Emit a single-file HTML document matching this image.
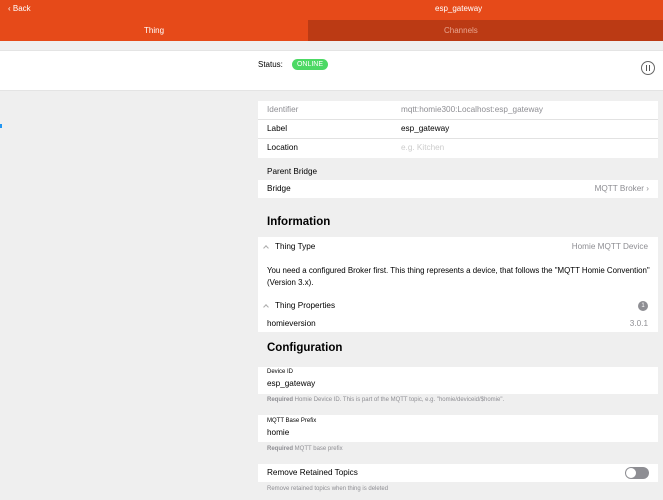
<!DOCTYPE html><html><head><style>
*{margin:0;padding:0;box-sizing:border-box}
body{width:663px;height:500px;overflow:hidden;background:#efefef;font-family:"Liberation Sans",sans-serif;font-size:8.2px;color:#000;position:relative}
.a{position:absolute;white-space:nowrap}
.r{position:absolute;white-space:nowrap;right:14px;text-align:right}
.w{position:absolute;background:#fff;left:258px;width:400px}
.line{position:absolute;left:258px;width:400px;height:1px;background:#e2e2e2}
.g{color:#8e8e93}
.car{position:absolute;width:4px;height:4px;border-left:1px solid #aaa;border-top:1px solid #aaa;transform:rotate(45deg)}
</style></head><body>
<div class="a" style="left:0;top:0;width:663px;height:41px;background:#e64a19"></div>
<div class="a" style="left:308px;top:20px;width:355px;height:21px;background:#bb3a14"></div>
<div class="a" style="left:8px;top:4px;color:#fff;font-size:8px">&#x2039; Back</div>
<div class="a" style="left:435px;top:4px;color:#fff;font-size:8px">esp_gateway</div>
<div class="a" style="left:144px;top:26px;color:#fff;font-size:8px">Thing</div>
<div class="a" style="left:444px;top:26px;color:#e9a58f;font-size:8px">Channels</div>
<div class="a" style="left:0;top:50px;width:663px;height:41px;background:#fff;border-top:1px solid #e4e4e4;border-bottom:1px solid #e4e4e4"></div>
<div class="a" style="left:258px;top:60px;font-size:8px">Status:</div>
<div class="a" style="left:292px;top:59px;width:36px;height:11px;border-radius:6px;background:#4cd964;color:#fff;font-size:7px;text-align:center;line-height:11px">ONLINE</div>
<div class="a" style="left:641px;top:61px;width:14px;height:14px;border:1.2px solid #666;border-radius:50%"></div>
<div class="a" style="left:646px;top:65px;width:1.3px;height:6px;background:#555"></div>
<div class="a" style="left:649px;top:65px;width:1.3px;height:6px;background:#555"></div>
<div class="a" style="left:0;top:124px;width:2px;height:4px;background:#2196f3"></div>

<div class="w" style="top:101px;height:57px"></div>
<div class="line" style="top:119px"></div><div class="line" style="top:138px"></div>
<div class="a g" style="left:267px;top:105px">Identifier</div>
<div class="a g" style="left:401px;top:105px">mqtt:homie300:Localhost:esp_gateway</div>
<div class="a" style="left:267px;top:124px">Label</div>
<div class="a" style="left:401px;top:124px">esp_gateway</div>
<div class="a" style="left:267px;top:143px">Location</div>
<div class="a" style="left:401px;top:143px;color:#ccc">e.g. Kitchen</div>
<div class="a" style="left:267px;top:167px">Parent Bridge</div>
<div class="w" style="top:180px;height:18px"></div>
<div class="r g" style="top:184px">MQTT Broker &#x203A;</div>
<div class="a" style="left:267px;top:184px">Bridge</div>
<div class="a" style="left:267px;top:216px;font-size:11.5px;font-weight:bold">Information</div>
<div class="w" style="top:237px;height:95px"></div>
<div class="car" style="left:264px;top:246px"></div>
<div class="a" style="left:275px;top:242px">Thing Type</div>
<div class="r g" style="top:242px;right:15px">Homie MQTT Device</div>
<div class="a" style="left:267px;top:266px;font-size:7.9px">You need a configured Broker first. This thing represents a device, that follows the "MQTT Homie Convention"</div>
<div class="a" style="left:267px;top:278px;font-size:7.9px">(Version 3.x).</div>
<div class="car" style="left:264px;top:305px"></div>
<div class="a" style="left:275px;top:301px">Thing Properties</div>
<div class="a" style="left:638px;top:301px;width:10px;height:10px;border-radius:50%;background:#8e8e93;color:#fff;font-size:6px;text-align:center;line-height:10px">1</div>
<div class="a" style="left:267px;top:319px">homieversion</div>
<div class="r g" style="top:319px;right:15px">3.0.1</div>
<div class="a" style="left:267px;top:342px;font-size:11.5px;font-weight:bold">Configuration</div>
<div class="w" style="top:367px;height:27px"></div>
<div class="a" style="left:267px;top:369px;font-size:6px">Device ID</div>
<div class="a" style="left:267px;top:379px">esp_gateway</div>
<div class="a g" style="left:267px;top:397px;font-size:6px"><b>Required</b> Homie Device ID. This is part of the MQTT topic, e.g. "homie/deviceid/$homie".</div>
<div class="w" style="top:415px;height:27px"></div>
<div class="a" style="left:267px;top:418px;font-size:6px">MQTT Base Prefix</div>
<div class="a" style="left:267px;top:428px">homie</div>
<div class="a g" style="left:267px;top:446px;font-size:6px"><b>Required</b> MQTT base prefix</div>
<div class="w" style="top:464px;height:18px"></div>
<div class="a" style="left:267px;top:468px">Remove Retained Topics</div>
<div class="a" style="left:625px;top:467px;width:24px;height:12px;border-radius:6px;background:#8e8e93"></div>
<div class="a" style="left:626px;top:468px;width:10px;height:10px;border-radius:50%;background:#fff"></div>
<div class="a g" style="left:267px;top:486px;font-size:6px">Remove retained topics when thing is deleted</div>
</body></html>
